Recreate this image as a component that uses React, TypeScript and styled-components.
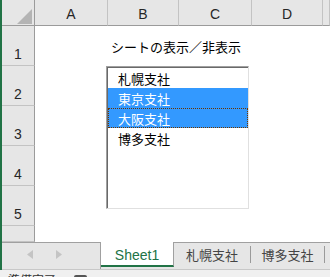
import React from "react";
import styled, { createGlobalStyle } from "styled-components";

const Global = createGlobalStyle`
  html, body { margin: 0; padding: 0; overflow: hidden; background: #ffffff; }
  * { box-sizing: border-box; }
`;

const JP = `"Noto Sans CJK JP", "Liberation Sans", sans-serif`;
const UI = `"Liberation Sans", "Noto Sans CJK JP", sans-serif`;

const Window = styled.div`
  width: 330px;
  height: 277px;
  display: flex;
  flex-direction: column;
  overflow: hidden;
`;

const Main = styled.div`
  border-left: 2px solid #217346;
  display: flex;
  flex-direction: column;
`;

const Sheet = styled.div`
  position: relative;
  display: grid;
  grid-template-columns: 33px 73px 71px 73px 71px 1fr;
  grid-template-rows: 26px 40px 40px 40px 40px 40px 16px;
  background: #ffffff;
`;

const Corner = styled.div`
  background: #e6e6e6;
  border-right: 1px solid #9b9b9b;
  border-bottom: 1px solid #9b9b9b;
  position: relative;
`;

const Tri = styled.svg`
  position: absolute;
  left: 15px;
  top: 9px;
`;

const ColHead = styled.div`
  background: #e6e6e6;
  border-right: 1px solid #c3c3c3;
  border-bottom: 1px solid #9b9b9b;
  display: flex;
  align-items: center;
  justify-content: center;
  padding-top: 3px;
  font-family: ${UI};
  font-size: 14px;
  color: #262626;
`;

const RowHead = styled.div`
  background: #e6e6e6;
  border-right: 1px solid #9b9b9b;
  border-bottom: 1px solid #c3c3c3;
  display: flex;
  align-items: flex-end;
  justify-content: center;
  padding-bottom: 3px;
  font-family: ${UI};
  font-size: 14px;
  color: #262626;
`;

const Cell = styled.div<{ $span?: number }>`
  grid-column: span ${(p) => p.$span ?? 1};
  background: #ffffff;
  display: flex;
  align-items: center;
  white-space: nowrap;
  padding-left: 3px;
  font-family: ${JP};
  font-size: 13px;
  color: #000000;
`;

const ListBox = styled.div`
  position: absolute;
  left: 104px;
  top: 66px;
  width: 143px;
  height: 143px;
  background: #ffffff;
  border-top: 1px solid #a0a0a0;
  border-left: 1px solid #a0a0a0;
  border-right: 1px solid #e0e0e0;
  border-bottom: 1px solid #e0e0e0;
  box-shadow: inset 1px 1px 0 #696969;
  padding: 1px 0 0 1px;
  display: flex;
  flex-direction: column;
`;

const Item = styled.div<{ $selected?: boolean; $focus?: boolean }>`
  height: 20px;
  display: flex;
  align-items: center;
  padding-left: ${(p) => (p.$focus ? 9 : 10)}px;
  font-family: ${JP};
  font-size: 13px;
  background: ${(p) => (p.$selected ? "#3399ff" : "transparent")};
  color: ${(p) => (p.$selected ? "#ffffff" : "#000000")};
  border: ${(p) => (p.$focus ? "1px dotted #6b3500" : "none")};
`;

const TabBar = styled.div`
  height: 28px;
  display: flex;
  background: #e6e6e6;
  border-bottom: 1px solid #c8c8c8;
`;

const Nav = styled.div`
  width: 99px;
  border-top: 1px solid #a0a0a0;
  border-right: 1px solid #a0a0a0;
  display: flex;
  align-items: center;
  gap: 23px;
  padding-left: 25px;
  padding-bottom: 3px;
`;

const ActiveTab = styled.div`
  width: 73px;
  height: 25px;
  background: #ffffff;
  border-right: 1px solid #a0a0a0;
  border-bottom: 2px solid #217346;
  display: flex;
  align-items: center;
  justify-content: center;
  padding-top: 3px;
  font-family: ${UI};
  font-size: 14px;
  color: #217346;
`;

const Tab = styled.div<{ $w: number }>`
  width: ${(p) => p.$w}px;
  height: 27px;
  border-top: 1px solid #a0a0a0;
  display: flex;
  align-items: center;
  padding-bottom: 3px;
`;

const TabLabel = styled.div`
  flex: 1;
  text-align: center;
  font-family: ${JP};
  font-size: 13px;
  color: #444444;
`;

const Sep = styled.div`
  width: 1px;
  height: 17px;
  background: #9a9a9a;
`;

const Rest = styled.div`
  flex: 1;
  border-top: 1px solid #a0a0a0;
`;

const StatusBar = styled.div`
  flex: 1;
  background: #f0f0f0;
  display: flex;
  align-items: flex-start;
  padding: 2px 0 0 8px;
  gap: 18px;
  font-family: ${JP};
  font-size: 12px;
  line-height: 16px;
  color: #333333;
`;

const MacroIcon = styled.div`
  width: 13px;
  height: 10px;
  margin-top: 3px;
  background: #555555;
  border-radius: 2px 2px 0 0;
`;

const rows = [1, 2, 3, 4, 5];
const items = ["札幌支社", "東京支社", "大阪支社", "博多支社"];

export default function App() {
  return (
    <Window>
      <Global />
      <Main>
        <Sheet>
          <Corner>
            <Tri width="15" height="15" viewBox="0 0 15 15">
              <polygon points="15,0 15,15 0,15" fill="#b4b4b4" />
            </Tri>
          </Corner>
          <ColHead>A</ColHead>
          <ColHead>B</ColHead>
          <ColHead>C</ColHead>
          <ColHead>D</ColHead>
          <ColHead />
          {rows.map((r) =>
            r === 1 ? (
              <React.Fragment key={r}>
                <RowHead>{r}</RowHead>
                <Cell />
                <Cell $span={3}>シートの表示／非表示</Cell>
                <Cell />
              </React.Fragment>
            ) : (
              <React.Fragment key={r}>
                <RowHead>{r}</RowHead>
                <Cell />
                <Cell />
                <Cell />
                <Cell />
                <Cell />
              </React.Fragment>
            )
          )}
          <RowHead />
          <Cell />
          <Cell />
          <Cell />
          <Cell />
          <Cell />
          <ListBox>
            {items.map((t, i) => (
              <Item key={t} $selected={i === 1 || i === 2} $focus={i === 2}>
                {t}
              </Item>
            ))}
          </ListBox>
        </Sheet>
        <TabBar>
          <Nav>
            <svg width="6" height="9" viewBox="0 0 6 9">
              <polygon points="6,0 6,9 0,4.5" fill="#c4c4c4" />
            </svg>
            <svg width="6" height="9" viewBox="0 0 6 9">
              <polygon points="0,0 0,9 6,4.5" fill="#c4c4c4" />
            </svg>
          </Nav>
          <ActiveTab>Sheet1</ActiveTab>
          <Tab $w={77}>
            <TabLabel>札幌支社</TabLabel>
            <Sep />
          </Tab>
          <Tab $w={74}>
            <TabLabel>博多支社</TabLabel>
            <Sep />
          </Tab>
          <Rest />
        </TabBar>
      </Main>
      <StatusBar>
        <span>準備完了</span>
        <MacroIcon />
      </StatusBar>
    </Window>
  );
}
